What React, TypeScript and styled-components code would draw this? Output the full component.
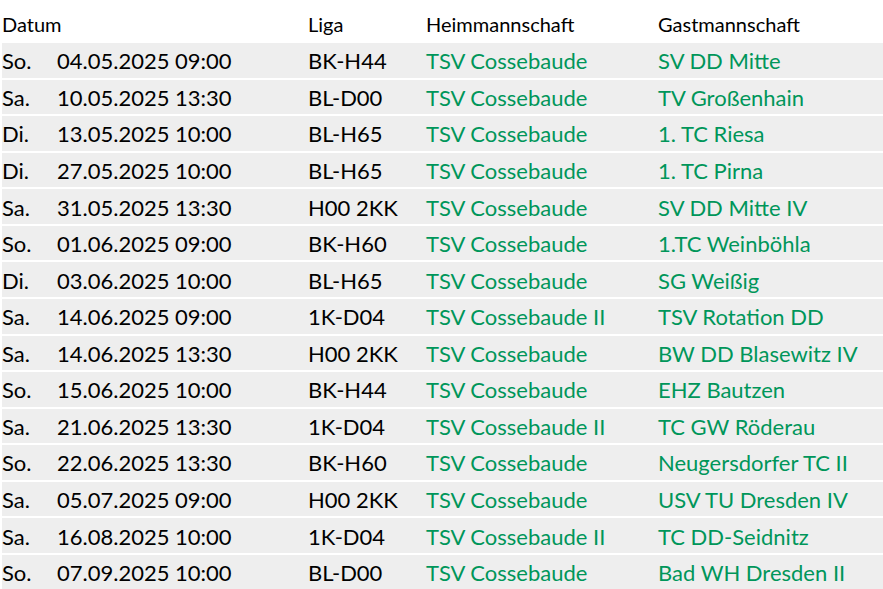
import React from "react";
import styled, { createGlobalStyle } from "styled-components";

const Global = createGlobalStyle`
  html, body { margin: 0; padding: 0; background: #ffffff; }
  body { font-family: Lato, "Open Sans", sans-serif; color: #000; overflow: hidden; }
`;

const Table = styled.div`
  display: flex;
  flex-direction: column;
  gap: 2px;
  padding-left: 2px;
  width: 900px;
`;

const cols = "55px 251px 118px 232px 1fr";

const HeaderRow = styled.div`
  display: grid;
  grid-template-columns: ${cols};
  height: 41px;
  align-items: center;
  font-size: 20px;
  padding-top: 6px;
  box-sizing: border-box;
`;

const Row = styled.div`
  display: grid;
  grid-template-columns: ${cols};
  height: 34.57px;
  box-sizing: border-box;
  padding-top: 1px;
  align-items: center;
  background: #eeeeee;
  font-size: 22px;
`;

const Cell = styled.div<{ $green?: boolean }>`
  white-space: nowrap;
  color: ${(p) => (p.$green ? "#00965a" : "#000")};
`;

const rows: [string, string, string, string, string][] = [
  ["So.", "04.05.2025 09:00", "BK-H44", "TSV Cossebaude", "SV DD Mitte"],
  ["Sa.", "10.05.2025 13:30", "BL-D00", "TSV Cossebaude", "TV Großenhain"],
  ["Di.", "13.05.2025 10:00", "BL-H65", "TSV Cossebaude", "1. TC Riesa"],
  ["Di.", "27.05.2025 10:00", "BL-H65", "TSV Cossebaude", "1. TC Pirna"],
  ["Sa.", "31.05.2025 13:30", "H00 2KK", "TSV Cossebaude", "SV DD Mitte IV"],
  ["So.", "01.06.2025 09:00", "BK-H60", "TSV Cossebaude", "1.TC Weinböhla"],
  ["Di.", "03.06.2025 10:00", "BL-H65", "TSV Cossebaude", "SG Weißig"],
  ["Sa.", "14.06.2025 09:00", "1K-D04", "TSV Cossebaude II", "TSV Rotation DD"],
  ["Sa.", "14.06.2025 13:30", "H00 2KK", "TSV Cossebaude", "BW DD Blasewitz IV"],
  ["So.", "15.06.2025 10:00", "BK-H44", "TSV Cossebaude", "EHZ Bautzen"],
  ["Sa.", "21.06.2025 13:30", "1K-D04", "TSV Cossebaude II", "TC GW Röderau"],
  ["So.", "22.06.2025 13:30", "BK-H60", "TSV Cossebaude", "Neugersdorfer TC II"],
  ["Sa.", "05.07.2025 09:00", "H00 2KK", "TSV Cossebaude", "USV TU Dresden IV"],
  ["Sa.", "16.08.2025 10:00", "1K-D04", "TSV Cossebaude II", "TC DD-Seidnitz"],
  ["So.", "07.09.2025 10:00", "BL-D00", "TSV Cossebaude", "Bad WH Dresden II"],
];

export default function App() {
  return (
    <>
      <Global />
      <Table>
        <HeaderRow>
          <Cell style={{ gridColumn: "1 / 3" }}>Datum</Cell>
          <Cell>Liga</Cell>
          <Cell>Heimmannschaft</Cell>
          <Cell>Gastmannschaft</Cell>
        </HeaderRow>
        {rows.map((r, i) => (
          <Row key={i}>
            <Cell>{r[0]}</Cell>
            <Cell>{r[1]}</Cell>
            <Cell>{r[2]}</Cell>
            <Cell $green>{r[3]}</Cell>
            <Cell $green>{r[4]}</Cell>
          </Row>
        ))}
      </Table>
    </>
  );
}
